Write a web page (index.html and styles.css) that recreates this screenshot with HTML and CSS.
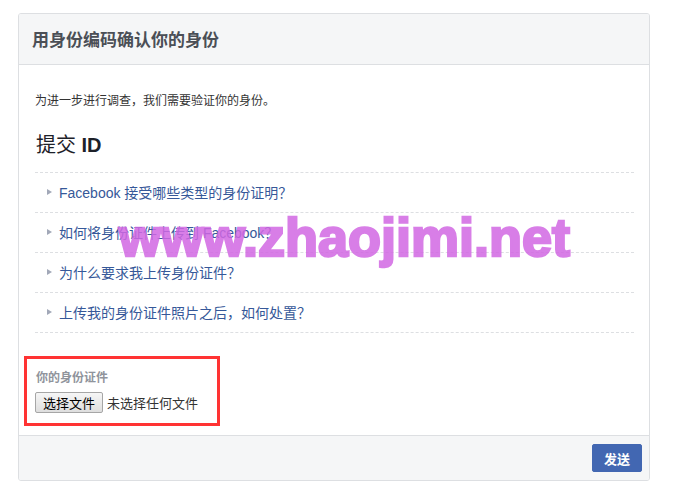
FILE: index.html
```html
<!DOCTYPE html>
<html lang="zh-CN">
<head>
<meta charset="utf-8">
<title>用身份编码确认你的身份</title>
<link rel="stylesheet" href="styles.css">
</head>
<body>
<div class="dialog">
  <div class="dialog-header">
    <h2 class="dialog-title">用身份编码确认你的身份</h2>
  </div>
  <div class="dialog-body">
    <p class="intro">为进一步进行调查，我们需要验证你的身份。</p>
    <h3 class="section-title"><span class="cjk">提交</span> ID</h3>
    <ul class="faq">
      <li class="faq-item"><span class="arrow"></span><a class="faq-link" href="#">Facebook 接受哪些类型的身份证明？</a></li>
      <li class="faq-item"><span class="arrow"></span><a class="faq-link" href="#">如何将身份证件上传到 Facebook？</a></li>
      <li class="faq-item"><span class="arrow"></span><a class="faq-link" href="#">为什么要求我上传身份证件？</a></li>
      <li class="faq-item"><span class="arrow"></span><a class="faq-link" href="#">上传我的身份证件照片之后，如何处置？</a></li>
    </ul>
    <div class="upload">
      <div class="upload-label">你的身份证件</div>
      <div class="file-row">
        <button class="file-btn" type="button">选择文件</button>
        <span class="file-status">未选择任何文件</span>
      </div>
    </div>
  </div>
  <div class="dialog-footer">
    <button class="send-btn" type="button">发送</button>
  </div>
</div>
<div class="watermark">www.zhaojimi.net</div>
</body>
</html>
```
FILE: styles.css
```css
* {
  box-sizing: border-box;
}

html, body {
  margin: 0;
  padding: 0;
  background: #ffffff;
}

body {
  font-family: "Liberation Sans", "Noto Sans CJK SC", Arial, sans-serif;
  color: #1d2129;
  position: relative;
  width: 685px;
  height: 486px;
  overflow: hidden;
}

.dialog {
  margin: 13px 0 0 18px;
  width: 632px;
  height: 468px;
  border: 1px solid #dddfe2;
  border-radius: 3px;
  display: flex;
  flex-direction: column;
  overflow: hidden;
}

.dialog-header {
  height: 51px;
  flex: none;
  background: #f5f6f7;
  border-bottom: 1px solid #dddfe2;
  display: flex;
  align-items: center;
  padding-left: 13px;
}

.dialog-title {
  margin: 0;
  font-family: "Noto Sans CJK SC", sans-serif;
  font-size: 17px;
  line-height: 20px;
  font-weight: bold;
  color: #4b4f56;
}

.dialog-body {
  height: 370px;
  flex: none;
  padding: 27px 15px 0 16px;
}

.intro {
  margin: 0;
  font-family: "Noto Sans CJK SC", sans-serif;
  font-size: 12px;
  line-height: 16px;
  color: #333333;
}

.section-title {
  margin: 24px 0 15px 1px;
  font-size: 20px;
  line-height: 24px;
  font-weight: bold;
  color: #1d2129;
}

.section-title .cjk {
  font-family: "Noto Sans CJK SC", sans-serif;
  font-weight: normal;
}

.faq {
  list-style: none;
  margin: 0;
  padding: 0;
  border-top: 1px dashed #dddfe2;
}

.faq-item {
  height: 40px;
  border-bottom: 1px dashed #dddfe2;
  display: flex;
  align-items: center;
  padding-left: 12px;
  padding-bottom: 2px;
}

.arrow {
  width: 0;
  height: 0;
  border-left: 5px solid #a2a8b8;
  border-top: 3.5px solid transparent;
  border-bottom: 3.5px solid transparent;
  margin-right: 7px;
}

.faq-link {
  font-size: 14px;
  color: #365899;
  text-decoration: none;
}

.upload {
  margin: 23px 0 0 -11px;
  width: 196px;
  height: 70px;
  border: 3px solid #ff3333;
  padding: 10px 0 0 9px;
}

.upload-label {
  font-family: "Noto Sans CJK SC", sans-serif;
  font-size: 12px;
  line-height: 16px;
  font-weight: bold;
  color: #90949c;
  margin-bottom: 7px;
}

.file-row {
  display: flex;
  align-items: center;
  gap: 4px;
  margin-left: -1px;
}

.file-btn {
  height: 21px;
  padding: 0 7px;
  font-family: "Noto Sans CJK SC", sans-serif;
  font-size: 13px;
  line-height: 19px;
  color: #000000;
  background: linear-gradient(#f6f6f6, #dedede);
  border: 1px solid #a6a6a6;
  border-radius: 2px;
}

.file-status {
  font-family: "Noto Sans CJK SC", sans-serif;
  font-size: 13px;
  color: #333333;
}

.dialog-footer {
  flex: 1;
  background: #f5f6f7;
  border-top: 1px solid #dddfe2;
  display: flex;
  justify-content: flex-end;
  align-items: flex-start;
  padding: 8px 7px 0 0;
}

.send-btn {
  width: 50px;
  height: 28px;
  padding: 0;
  background: #4267b2;
  border: 1px solid #4267b2;
  border-radius: 2px;
  color: #ffffff;
  font-family: "Noto Sans CJK SC", sans-serif;
  font-size: 13px;
  font-weight: bold;
}

.watermark {
  position: absolute;
  left: 119px;
  top: 210px;
  font-family: "Liberation Sans", Arial, sans-serif;
  font-size: 54px;
  line-height: 1;
  font-weight: bold;
  color: rgb(210, 104, 227);
  -webkit-text-stroke: 2.5px rgb(210, 104, 227);
  opacity: 0.85;
  white-space: nowrap;
}
```
